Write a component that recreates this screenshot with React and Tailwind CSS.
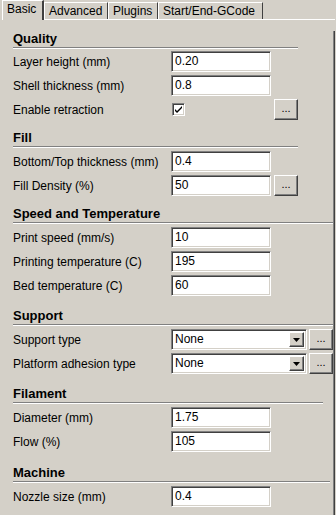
import React from 'react';

const sunken =
  'border border-t-[#808080] border-l-[#808080] border-r-white border-b-white shadow-[inset_1px_1px_0_#404040,inset_-1px_-1px_0_#d4d0c8] bg-white';
const raised =
  'border border-t-white border-l-white border-r-[#404040] border-b-[#404040] shadow-[inset_-1px_-1px_0_#808080] bg-[#d4d0c8]';

function Row({ label, children }) {
  return (
    <div className="flex items-center h-[21px]">
      <div className="w-[158px] shrink-0 text-[12px] leading-[14px] whitespace-nowrap">{label}</div>
      {children}
    </div>
  );
}

function TextField({ value }) {
  return (
    <div className={`${sunken} w-[100px] h-[21px] pl-[3px] text-[12px] leading-[19px]`}>{value}</div>
  );
}

function Dots({ className = '' }) {
  return (
    <div className={`${raised} w-[24px] h-[21px] flex items-center justify-center text-[11px] leading-none pb-[2px] ${className}`}>
      ...
    </div>
  );
}

function Select({ value }) {
  return (
    <div className={`${sunken} w-[136px] h-[21px] flex items-stretch p-[2px]`}>
      <div className="flex-1 text-[12px] leading-[15px] pl-[1px]">{value}</div>
      <div className={`${raised} w-[15px] flex items-center justify-center`}>
        <svg width="7" height="4" viewBox="0 0 7 4">
          <path d="M0 0h7L3.5 4z" fill="#000" />
        </svg>
      </div>
    </div>
  );
}

// top: margin above the header, gap: space between the separator and the rows
function Section({ title, line, top, gap, children }) {
  return (
    <div className={top}>
      <div className="h-[16px] text-[13px] leading-[16px] font-bold">{title}</div>
      <div className="h-px bg-[#808080]" style={{ width: line }} />
      <div className="h-px bg-white" style={{ width: line }} />
      <div className={`flex flex-col gap-[3px] ${gap}`}>{children}</div>
    </div>
  );
}

function Tab({ label, width, active }) {
  if (active) {
    return (
      <div
        className="h-[20px] ml-[2px] border-l border-t border-white border-r-2 border-r-[#404040] pl-[4px] text-[12px] leading-[14px] pt-[1px]"
        style={{ width }}
      >
        {label}
      </div>
    );
  }
  return (
    <div className="h-[20px] pt-[2px] border-b border-white" style={{ width }}>
      <div className="h-[17px] border-l border-t border-white border-r border-r-[#404040] pl-[4px] text-[12px] leading-[14px] pt-[1px]">
        {label}
      </div>
    </div>
  );
}

export default function App() {
  return (
    <div className="w-[336px] h-[515px] overflow-hidden bg-[#d4d0c8] text-black font-['Liberation_Sans',Arial,sans-serif]">
      <div className="flex">
        <Tab label="Basic" width={42} active />
        <Tab label="Advanced" width={64} />
        <Tab label="Plugins" width={50} />
        <Tab label="Start/End-GCode" width={105} />
        <div className="flex-1 h-[20px] border-b border-white mr-[1px]" />
      </div>
      <div className="w-[335px] h-[495px] border-r border-r-[#404040] shadow-[inset_-1px_0_0_#808080] pl-[13px]">
        <Section title="Quality" line={285} top="mt-[11px]" gap="mt-[2px]">
          <Row label="Layer height (mm)"><TextField value="0.20" /></Row>
          <Row label="Shell thickness (mm)"><TextField value="0.8" /></Row>
          <Row label="Enable retraction">
            <div className="w-[100px] h-[21px] flex items-center pl-[1px]">
              <div className={`${sunken} w-[13px] h-[13px] flex items-center justify-center`}>
                <svg width="9" height="9" viewBox="0 0 9 9">
                  <path d="M1 4l2 2 5-5v2L3 8 1 6z" fill="#000" />
                </svg>
              </div>
            </div>
            <Dots className="ml-[3px]" />
          </Row>
        </Section>
        <Section title="Fill" line={285} top="mt-[10px]" gap="mt-[3px]">
          <Row label="Bottom/Top thickness (mm)"><TextField value="0.4" /></Row>
          <Row label="Fill Density (%)">
            <TextField value="50" />
            <Dots className="ml-[3px]" />
          </Row>
        </Section>
        <Section title="Speed and Temperature" line={320} top="mt-[10px]" gap="mt-[3px]">
          <Row label="Print speed (mm/s)"><TextField value="10" /></Row>
          <Row label="Printing temperature (C)"><TextField value="195" /></Row>
          <Row label="Bed temperature (C)"><TextField value="60" /></Row>
        </Section>
        <Section title="Support" line={320} top="mt-[12px]" gap="mt-[3px]">
          <Row label="Support type">
            <Select value="None" />
            <Dots className="ml-[2px]" />
          </Row>
          <Row label="Platform adhesion type">
            <Select value="None" />
            <Dots className="ml-[2px]" />
          </Row>
        </Section>
        <Section title="Filament" line={310} top="mt-[12px]" gap="mt-[3px]">
          <Row label="Diameter (mm)"><TextField value="1.75" /></Row>
          <Row label="Flow (%)"><TextField value="105" /></Row>
        </Section>
        <Section title="Machine" line={317} top="mt-[13px]" gap="mt-[3px]">
          <Row label="Nozzle size (mm)"><TextField value="0.4" /></Row>
        </Section>
      </div>
    </div>
  );
}
